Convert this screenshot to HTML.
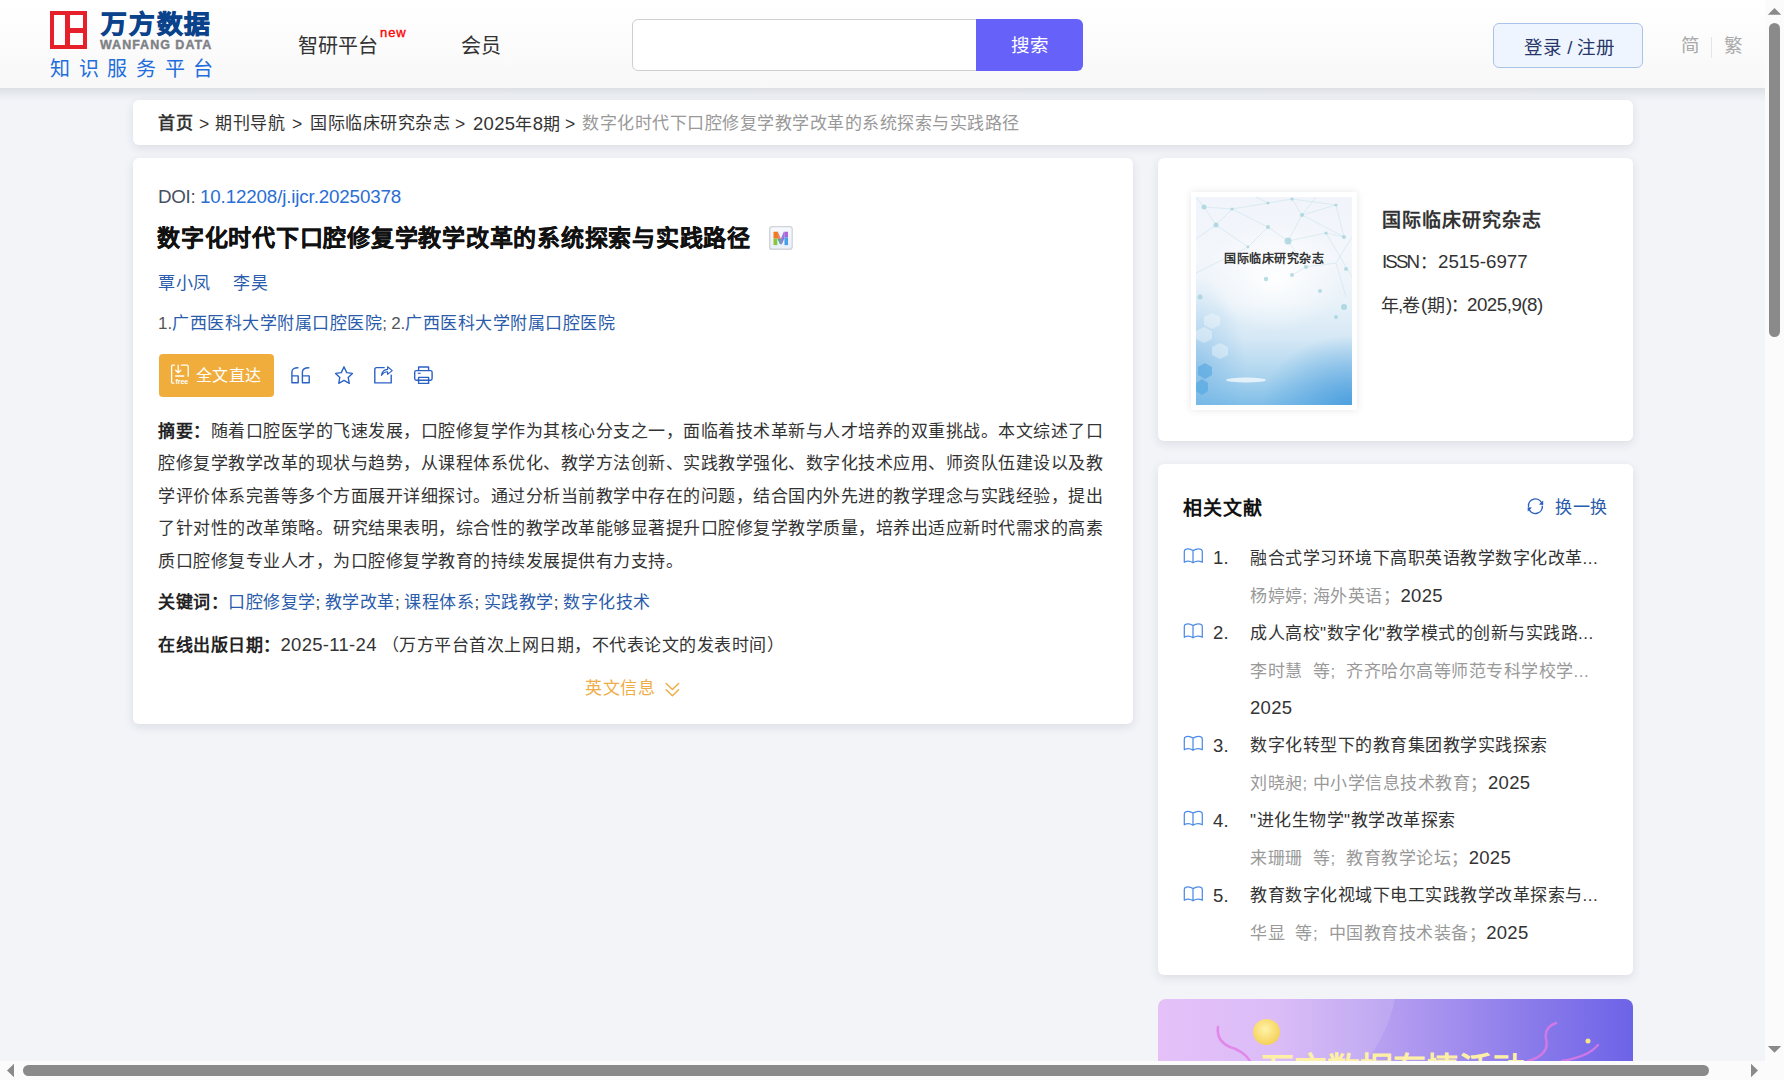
<!DOCTYPE html>
<html lang="zh-CN"><head><meta charset="utf-8">
<style>
*{box-sizing:border-box;margin:0;padding:0}
html,body{width:1784px;height:1080px;overflow:hidden;background:#f2f4f8;font-family:"Liberation Sans",sans-serif;color:#333}
.abs{position:absolute}
#hdr{position:absolute;left:0;top:0;width:1765px;height:88px;background:linear-gradient(#fff,#f8f8f9)}
#hshadow{position:absolute;left:0;top:88px;width:1765px;height:14px;background:linear-gradient(rgba(30,40,60,0.10),rgba(30,40,60,0.03) 55%,rgba(30,40,60,0))}
.card{position:absolute;background:#fff;border-radius:6px;box-shadow:0 3px 10px rgba(40,50,70,0.11)}
.t{position:absolute;white-space:nowrap;line-height:1}
#vsb{position:absolute;left:1765px;top:0;width:19px;height:1080px;background:#fbfbfb}
#hsb{position:absolute;left:0;top:1061px;width:1784px;height:19px;background:#fbfbfb}
.bcg{font-size:17.5px;color:#333}.c18{margin:1.5px 0 0 1px;font-size:17px;letter-spacing:0.5px;color:#333;font-weight:350}.c18 b{font-weight:bold}.cj{font-size:19px}.lat{font-size:18.5px;letter-spacing:0.3px}
</style></head><body>
<div id="hdr">
  <div class="abs" style="left:50px;top:11px;width:37px;height:38px;border:4.5px solid #e5202a"></div>
  <div class="abs" style="left:65px;top:11px;width:4.5px;height:38px;background:#e5202a"></div>
  <div class="abs" style="left:65px;top:28px;width:22px;height:4.5px;background:#e5202a"></div>
  <div class="t" id="lg1" style="left:101px;top:12px;font-size:25px;font-weight:900;color:#0a438b;-webkit-text-stroke:0.9px #0a438b;letter-spacing:2px;transform-origin:0 0;transform:scaleX(1.03)">万方数据</div>
  <div class="t" id="lg2" style="left:100px;top:39px;font-size:12.5px;font-weight:bold;color:#7e8186;-webkit-text-stroke:0.4px #7e8186;letter-spacing:1.0px">WANFANG DATA</div>
  <div class="t" id="lg3" style="left:50px;top:58.5px;font-size:20px;font-weight:500;color:#1f6edc;letter-spacing:8.7px">知识服务平台</div>
  <div class="t" style="left:298px;top:35.5px;font-size:20px;font-weight:350;color:#333">智研平台</div>
  <div class="t" style="left:380px;top:25.5px;font-size:13px;letter-spacing:0.9px;-webkit-text-stroke:0.35px #f00;color:#f00">new</div>
  <div class="t" style="left:461px;top:35.5px;font-size:20px;font-weight:350;color:#333">会员</div>
  <div class="abs" style="left:632px;top:19px;width:351px;height:52px;border:1px solid #cfcfd3;border-radius:6px 0 0 6px;background:#fff"></div>
  <div class="abs" style="left:976px;top:19px;width:107px;height:52px;background:#6661f9;border-radius:0 6px 6px 0"></div>
  <div class="t" style="left:1011px;top:37px;font-size:18.5px;color:#fff">搜索</div>
  <div class="abs" style="left:1493px;top:23px;width:150px;height:45px;border:1px solid #a8c2ea;border-radius:6px;background:#eff5fe"></div>
  <div class="t" style="left:1524px;top:38.5px;font-size:18.5px;color:#28376a">登录 / 注册</div>
  <div class="t" style="left:1681px;top:37px;font-size:18.5px;color:#a9a9a9">简</div>
  <div class="abs" style="left:1711px;top:37px;width:1px;height:21px;background:#e4e4e4"></div>
  <div class="t" style="left:1724px;top:37px;font-size:18.5px;color:#a9a9a9">繁</div>
</div>
<div id="hshadow"></div>

<!-- breadcrumb -->
<div class="card" style="left:133px;top:100px;width:1500px;height:45px"></div>
<div class="t c18" style="left:157px;top:113px;font-weight:bold;color:#333">首页</div>
<div class="t bcg" style="left:199px;top:116px">&gt;</div>
<div class="t c18" style="left:214px;top:113px">期刊导航</div>
<div class="t bcg" style="left:292px;top:116px">&gt;</div>
<div class="t c18" style="left:309px;top:113px">国际临床研究杂志</div>
<div class="t bcg" style="left:455px;top:116px">&gt;</div>
<div class="t c18" style="left:472px;top:113px"><span class="lat">2025</span>年<span class="lat">8</span>期</div>
<div class="t bcg" style="left:565px;top:116px">&gt;</div>
<div class="t c18" style="left:581px;top:113px;color:#999">数字化时代下口腔修复学教学改革的系统探索与实践路径</div>

<div class="card" style="left:133px;top:158px;width:1000px;height:566px"></div>
<div class="t" style="left:158px;top:188px;font-size:18.8px;letter-spacing:-0.3px;color:#474f60">DOI:</div><div class="t" style="left:200px;top:188px;font-size:18.8px;letter-spacing:-0.15px;color:#2a6ed4">10.12208/j.ijcr.20250378</div>
<div class="t" style="left:157px;top:227px;font-size:23px;letter-spacing:0.75px;font-weight:bold;color:#111;-webkit-text-stroke:0.3px #111">数字化时代下口腔修复学教学改革的系统探索与实践路径</div>
<div class="abs" style="left:769px;top:227px;width:23px;height:23px;border:1px solid #d8d8d8;border-radius:2px;background:#f6f6f6"></div>
<div class="t c18" style="left:157px;top:273px;color:#2a5cab">覃小凤</div>
<div class="t c18" style="left:232px;top:273px;color:#2a5cab">李昊</div>
<div class="t c18" style="left:157px;top:313px;color:#2a5cab"><span style="color:#555;font-size:17px;letter-spacing:0">1.</span>广西医科大学附属口腔医院<span style="color:#555;font-size:17px;letter-spacing:-0.2px">; 2.</span>广西医科大学附属口腔医院</div>
<div class="abs" style="left:159px;top:354px;width:115px;height:43px;background:#f0ad3b;border-radius:4px"></div>
<div class="t c18" style="left:195px;top:366px;color:#fff;font-size:16px;letter-spacing:0.25px">全文直达</div>
<div class="t c18" style="left:157px;top:421px"><b style="color:#222">摘要：</b>随着口腔医学的飞速发展，口腔修复学作为其核心分支之一，面临着技术革新与人才培养的双重挑战。本文综述了口</div>
<div class="t c18" style="left:157px;top:453.5px">腔修复学教学改革的现状与趋势，从课程体系优化、教学方法创新、实践教学强化、数字化技术应用、师资队伍建设以及教</div>
<div class="t c18" style="left:157px;top:486px">学评价体系完善等多个方面展开详细探讨。通过分析当前教学中存在的问题，结合国内外先进的教学理念与实践经验，提出</div>
<div class="t c18" style="left:157px;top:518.5px">了针对性的改革策略。研究结果表明，综合性的教学改革能够显著提升口腔修复学教学质量，培养出适应新时代需求的高素</div>
<div class="t c18" style="left:157px;top:551px">质口腔修复专业人才，为口腔修复学教育的持续发展提供有力支持。</div>
<div class="t c18" style="left:157px;top:592px;color:#2a5cab"><b style="color:#222">关键词：</b>口腔修复学<span style="color:#333;font-size:17px;letter-spacing:0;font-family:'Liberation Sans'">; </span>教学改革<span style="color:#333;font-size:17px;letter-spacing:0;font-family:'Liberation Sans'">; </span>课程体系<span style="color:#333;font-size:17px;letter-spacing:0;font-family:'Liberation Sans'">; </span>实践教学<span style="color:#333;font-size:17px;letter-spacing:0;font-family:'Liberation Sans'">; </span>数字化技术</div>
<div class="t c18" style="left:157px;top:634px;color:#333"><b style="color:#222">在线出版日期：</b><span class="lat">2025-11-24</span> （万方平台首次上网日期，不代表论文的发表时间）</div>
<div class="t c18" style="left:584px;top:678px;color:#efad47">英文信息</div>

<!-- right cards -->
<div class="card" style="left:1158px;top:158px;width:475px;height:283px"></div>
<div class="abs" style="left:1191px;top:192px;width:166px;height:218px;background:#fff;box-shadow:0 0 8px rgba(0,0,0,0.10)"></div>
<div class="abs" id="cover" style="left:1196px;top:197px;width:156px;height:208px;overflow:hidden;
background:
radial-gradient(ellipse 70px 55px at 78px 80px, rgba(255,255,255,0.95), rgba(255,255,255,0) 100%),
radial-gradient(ellipse 90px 70px at 156px 208px, rgba(60,150,220,0.75), rgba(60,150,220,0) 100%),
radial-gradient(ellipse 50px 90px at 0px 170px, rgba(90,165,225,0.4), rgba(90,165,225,0) 100%),
linear-gradient(180deg,#f1f4fa 0%,#f3f6fb 30%,#e9f2f9 50%,#d5e8f5 68%,#acd4ee 86%,#80bee8 100%)">
<svg width="156" height="208" style="position:absolute;left:0;top:0" viewBox="0 0 156 208">
<g stroke="#a8d6df" stroke-width="0.5" fill="none" opacity="0.65">
<path d="M8 10 L36 12 L72 6 L96 2 L140 8 M36 12 L20 28 L8 10 M36 12 L72 30 L92 44 L106 18 L96 2 M72 30 L52 50 L20 28 M106 18 L140 8 L148 40 L106 18 M92 44 L130 36 L148 40 M92 44 L110 70 L140 66 L156 40 M52 50 L0 76 M110 70 L96 78 M20 28 L0 42 M130 36 L156 80 M8 10 L0 0 M140 66 L150 100 M72 6 L60 0 M106 18 L120 0"/>
</g>
<g fill="#9dd0da" opacity="0.7">
<circle cx="8" cy="10" r="2.5"/><circle cx="20" cy="28" r="2.5"/><circle cx="36" cy="12" r="1.6"/><circle cx="72" cy="6" r="1.6"/><circle cx="96" cy="2" r="1.6"/><circle cx="106" cy="18" r="2"/><circle cx="140" cy="8" r="1.6"/><circle cx="72" cy="30" r="2"/><circle cx="92" cy="44" r="3.5"/><circle cx="52" cy="50" r="1.4"/><circle cx="130" cy="36" r="1.6"/><circle cx="148" cy="40" r="2"/><circle cx="110" cy="70" r="2"/><circle cx="96" cy="78" r="2"/><circle cx="70" cy="82" r="2.2"/><circle cx="124" cy="94" r="2"/><circle cx="4" cy="100" r="2.5"/><circle cx="148" cy="110" r="3"/><circle cx="140" cy="120" r="2"/><circle cx="150" cy="72" r="2"/>
</g>
<g fill="#ffffff" opacity="0.35">
<polygon points="8,120 16,116 24,120 24,128 16,132 8,128"/><polygon points="0,134 8,130 16,134 16,142 8,146 0,142"/><polygon points="16,150 24,146 32,150 32,158 24,162 16,158"/>
</g>
<g fill="#4aa3e0" opacity="0.55">
<polygon points="2,170 9,166 16,170 16,178 9,182 2,178"/><polygon points="0,186 6,182 12,186 12,194 6,198 0,194"/>
</g>
<ellipse cx="50" cy="183" rx="20" ry="2.5" fill="#ffffff" opacity="0.7"/>
</svg>
<div class="t" style="left:28px;top:56px;font-size:12px;font-weight:bold;color:#333;letter-spacing:0.5px">国际临床研究杂志</div>
</div>
<div class="t" style="left:1382px;top:210.5px;font-size:19px;letter-spacing:1px;font-weight:bold;color:#333">国际临床研究杂志</div>
<div class="t" style="left:1382px;top:253px;font-size:18.75px;letter-spacing:-1.9px;color:#333">ISSN</div><div class="t" style="left:1420px;top:254px;font-size:17px;color:#333">：</div><div class="t" style="left:1438px;top:253px;font-size:18.75px;color:#333">2515-6977</div>
<div class="t" style="left:1381px;top:297px;font-size:18px;color:#333">年</div><div class="t" style="left:1398px;top:296px;font-size:18.75px;color:#333">,</div><div class="t" style="left:1402px;top:297px;font-size:18px;color:#333">卷</div><div class="t" style="left:1421px;top:296px;font-size:18.75px;color:#333">(</div><div class="t" style="left:1427px;top:297px;font-size:18px;color:#333">期</div><div class="t" style="left:1446px;top:296px;font-size:18.75px;color:#333">)</div><div class="t" style="left:1451px;top:297px;font-size:17px;color:#333">：</div><div class="t" style="left:1467px;top:296px;font-size:18.75px;letter-spacing:-0.5px;color:#333">2025,9(8)</div>

<div class="card" style="left:1158px;top:464px;width:475px;height:511px"></div>
<div class="t" style="left:1183px;top:498.5px;font-size:19px;letter-spacing:1px;font-weight:bold;color:#111">相关文献</div>
<div class="t c18" style="left:1554px;top:497px;color:#2a5cab">换一换</div>
<div class="t lat" style="left:1213px;top:549px;color:#333">1.</div>
<div class="t c18" style="left:1249px;top:548px;color:#333">融合式学习环境下高职英语教学数字化改革...</div>
<div class="t c18" style="left:1249px;top:585px;color:#999">杨婷婷; 海外英语；<span class="lat" style="color:#333">2025</span></div>
<div class="t lat" style="left:1213px;top:624px;color:#333">2.</div>
<div class="t c18" style="left:1249px;top:623px;color:#333">成人高校"数字化"教学模式的创新与实践路...</div>
<div class="t c18" style="left:1249px;top:660px;color:#999">李时慧&nbsp;&nbsp;等;&nbsp;&nbsp;齐齐哈尔高等师范专科学校学...<span class="lat" style="color:#333"></span></div>
<div class="t lat" style="left:1250px;top:699px;color:#333">2025</div>
<div class="t lat" style="left:1213px;top:736.5px;color:#333">3.</div>
<div class="t c18" style="left:1249px;top:735.5px;color:#333">数字化转型下的教育集团教学实践探索</div>
<div class="t c18" style="left:1249px;top:772.5px;color:#999">刘晓昶; 中小学信息技术教育；<span class="lat" style="color:#333">2025</span></div>
<div class="t lat" style="left:1213px;top:811.5px;color:#333">4.</div>
<div class="t c18" style="left:1249px;top:810.5px;color:#333">"进化生物学"教学改革探索</div>
<div class="t c18" style="left:1249px;top:847.5px;color:#999">来珊珊&nbsp;&nbsp;等;&nbsp;&nbsp;教育教学论坛；<span class="lat" style="color:#333">2025</span></div>
<div class="t lat" style="left:1213px;top:886.5px;color:#333">5.</div>
<div class="t c18" style="left:1249px;top:885.5px;color:#333">教育数字化视域下电工实践教学改革探索与...</div>
<div class="t c18" style="left:1249px;top:922.5px;color:#999">华显&nbsp;&nbsp;等;&nbsp;&nbsp;中国教育技术装备；<span class="lat" style="color:#333">2025</span></div>

<div class="abs" style="left:1158px;top:999px;width:475px;height:80px;border-radius:8px;overflow:hidden;
background:linear-gradient(90deg,#e2b9f8 0%,#d6b3f6 25%,#b39cf0 50%,#8f7feb 75%,#6d63e7 100%)">
<div class="abs" style="left:-60px;top:-180px;width:300px;height:300px;border-radius:50%;background:rgba(255,255,255,0.12)"></div>
<div class="abs" style="left:95px;top:20px;width:27px;height:26px;border-radius:50%;background:radial-gradient(circle at 45% 40%,#fff3a8,#f6d25c 70%,#e7b640)"></div>
<div class="t" style="left:103px;top:54px;font-size:33px;font-weight:bold;color:#fdf0a6;letter-spacing:0">万方数据有情活动</div>
<svg class="abs" style="left:0;top:0" width="475" height="62"><g fill="none" stroke="#e27ae6" stroke-width="2.5" stroke-linecap="round" opacity="0.8"><path d="M60 28 Q58 42 72 48 Q86 52 92 62"/><path d="M370 62 Q392 56 388 40 Q386 28 398 24"/><path d="M404 62 Q430 58 440 46"/></g><circle cx="430" cy="42" r="2.5" fill="#f7e48a"/></svg>
</div>
<svg class="abs" style="left:0;top:0;pointer-events:none" width="1784" height="1080" viewBox="0 0 1784 1080">
<!-- free doc icon -->
<g fill="none" stroke="#fff" stroke-width="1.3" stroke-linecap="round" stroke-linejoin="round">
<path d="M174.5 365.2 H172.8 Q171.6 365.2 171.6 366.5 V382 Q171.6 383.2 172.8 383.2 H173.8"/>
<path d="M181.5 365.2 H187 Q188.2 365.2 188.2 366.5 V376.2"/>
<path d="M178.2 365.2 V372.6 M175.6 370.2 L178.2 372.8 L180.8 370.2"/>
<path d="M175.6 376 H183.8"/>
</g>
<text x="175.4" y="384.2" font-family="Liberation Sans" font-size="7.2" font-weight="bold" fill="#fff" letter-spacing="-0.1">free</text>
<!-- 66 icon -->
<g fill="none" stroke="#2a62c4" stroke-width="1.4" stroke-linejoin="round">
<path d="M298.4 367.8 Q292 367.6 291.9 372 V382.8 H298.2 V375.9 H291.9"/>
<path d="M309.3 367.8 Q302.6 367.6 302.4 372 V382.8 H309.2 V375.9 H302.4"/>
</g>
<!-- star -->
<path fill="none" stroke="#2a62c4" stroke-width="1.35" stroke-linejoin="round" d="M344 366.8 L346.7 372.6 L352.4 373.4 L348.2 377.5 L349.3 383.3 L344 380.4 L338.7 383.3 L339.8 377.5 L335.6 373.4 L341.3 372.6 Z"/>
<!-- share -->
<g fill="none" stroke="#2a62c4" stroke-width="1.4" stroke-linejoin="round" stroke-linecap="round">
<path d="M384.2 367.6 H376.6 Q374.8 367.6 374.8 369.4 V382.9 H391.2 V375.3"/>
</g>
<path fill="none" stroke="#2a62c4" stroke-width="1.15" stroke-linejoin="round" d="M381.4 375.3 Q382.4 369.8 387.6 369.4 V366.7 L392.2 370.6 L387.6 374.4 V371.8 Q384.2 371.6 381.4 375.3 Z"/>
<!-- print -->
<g fill="none" stroke="#2a62c4" stroke-width="1.4" stroke-linejoin="round">
<path d="M418.6 370.6 V367 H428.6 V370.6"/>
<rect x="414.7" y="370.6" width="17.4" height="9.6" rx="1.6"/>
<rect x="418.6" y="377.4" width="10" height="6"/>
</g>
<path d="M417.8 373.3 H420.6" stroke="#2a62c4" stroke-width="1.2"/>
<!-- M icon -->
<defs><linearGradient id="mbg" x1="0" y1="0" x2="0" y2="1"><stop offset="0" stop-color="#f7f9fd"/><stop offset="1" stop-color="#e9f0fa"/></linearGradient></defs>
<rect x="769.8" y="226.6" width="22.4" height="22.6" rx="2.5" fill="url(#mbg)" stroke="#cfd2d6" stroke-width="1.2"/>
<clipPath id="mclip"><polygon points="773.5,245.2 773.5,231.8 777.9,231.8 780.9,238.8 783.8,231.8 788.1,231.8 788.1,245.2 784.4,245.2 784.4,238.4 781.9,244.2 779.9,244.2 777.3,238.4 777.3,245.2"/></clipPath>
<g clip-path="url(#mclip)">
<rect x="773" y="231" width="5" height="7.5" fill="#f07a1c"/>
<rect x="773" y="238.5" width="4.5" height="7" fill="#88c636"/>
<rect x="777.5" y="231" width="3.6" height="8" fill="#e8826c"/>
<rect x="777.5" y="239" width="3.6" height="6.5" fill="#5aa69c"/>
<rect x="781.1" y="231" width="3.2" height="14.5" fill="#8d7cda"/>
<rect x="784.3" y="231" width="4" height="6.5" fill="#ac66d6"/>
<rect x="784.3" y="237.5" width="4" height="8" fill="#46a0e8"/>
</g>
<!-- chevrons 英文信息 -->
<g fill="none" stroke="#efad47" stroke-width="1.5" stroke-linecap="round" stroke-linejoin="round">
<path d="M666.2 683.5 L672.4 689.5 L678.6 683.5"/>
<path d="M666.2 689.8 L672.4 695.8 L678.6 689.8"/>
</g>
<!-- refresh -->
<g fill="none" stroke="#2a5fc0" stroke-width="1.4" stroke-linecap="round">
<path d="M1528.5 506.2 A6.9 6.9 0 0 1 1541.6 502.8"/>
<path d="M1542.3 506.2 A6.9 6.9 0 0 1 1529.2 509.6"/>
</g>
<path fill="#2a5fc0" d="M1543.2 500.6 L1543.2 505 L1538.9 504.6 Z M1527.7 511.6 L1527.7 507.2 L1532 507.6 Z"/>
<!-- books -->
<g fill="none" stroke="#4d8ce6" stroke-width="1.25" stroke-linejoin="round" id="book">
<path d="M1193 550.6 Q1189.5 548.2 1186.2 549.2 Q1184.3 549.7 1184.3 551.6 V562.3 Q1188.5 559.9 1193 562.8 Q1197.5 559.9 1202.3 562.3 V551.6 Q1202.3 549.7 1200.4 549.2 Q1197 548.2 1193 550.6 V562.8"/>
</g>
<use href="#book" y="75"/>
<use href="#book" y="187.5"/>
<use href="#book" y="262.5"/>
<use href="#book" y="338"/>
</svg>
<div id="vsb">
<div class="abs" style="left:4px;top:23px;width:11px;height:314px;border-radius:5.5px;background:#8a8a8a"></div>
</div>
<div id="hsb">
<div class="abs" style="left:23px;top:4px;width:1686px;height:11px;border-radius:5.5px;background:#8a8a8a"></div>
</div>
<svg class="abs" style="left:0;top:0;pointer-events:none" width="1784" height="1080">
<polygon points="1767.8,14.8 1781.2,14.8 1774.5,8" fill="#8a8a8a"/>
<polygon points="1767.8,1046 1781.2,1046 1774.5,1052.8" fill="#8a8a8a"/>
<polygon points="14,1063.8 14,1077.2 7,1070.5" fill="#8a8a8a"/>
<polygon points="1751,1063.8 1751,1077.2 1758,1070.5" fill="#8a8a8a"/>
</svg>

</body></html>
